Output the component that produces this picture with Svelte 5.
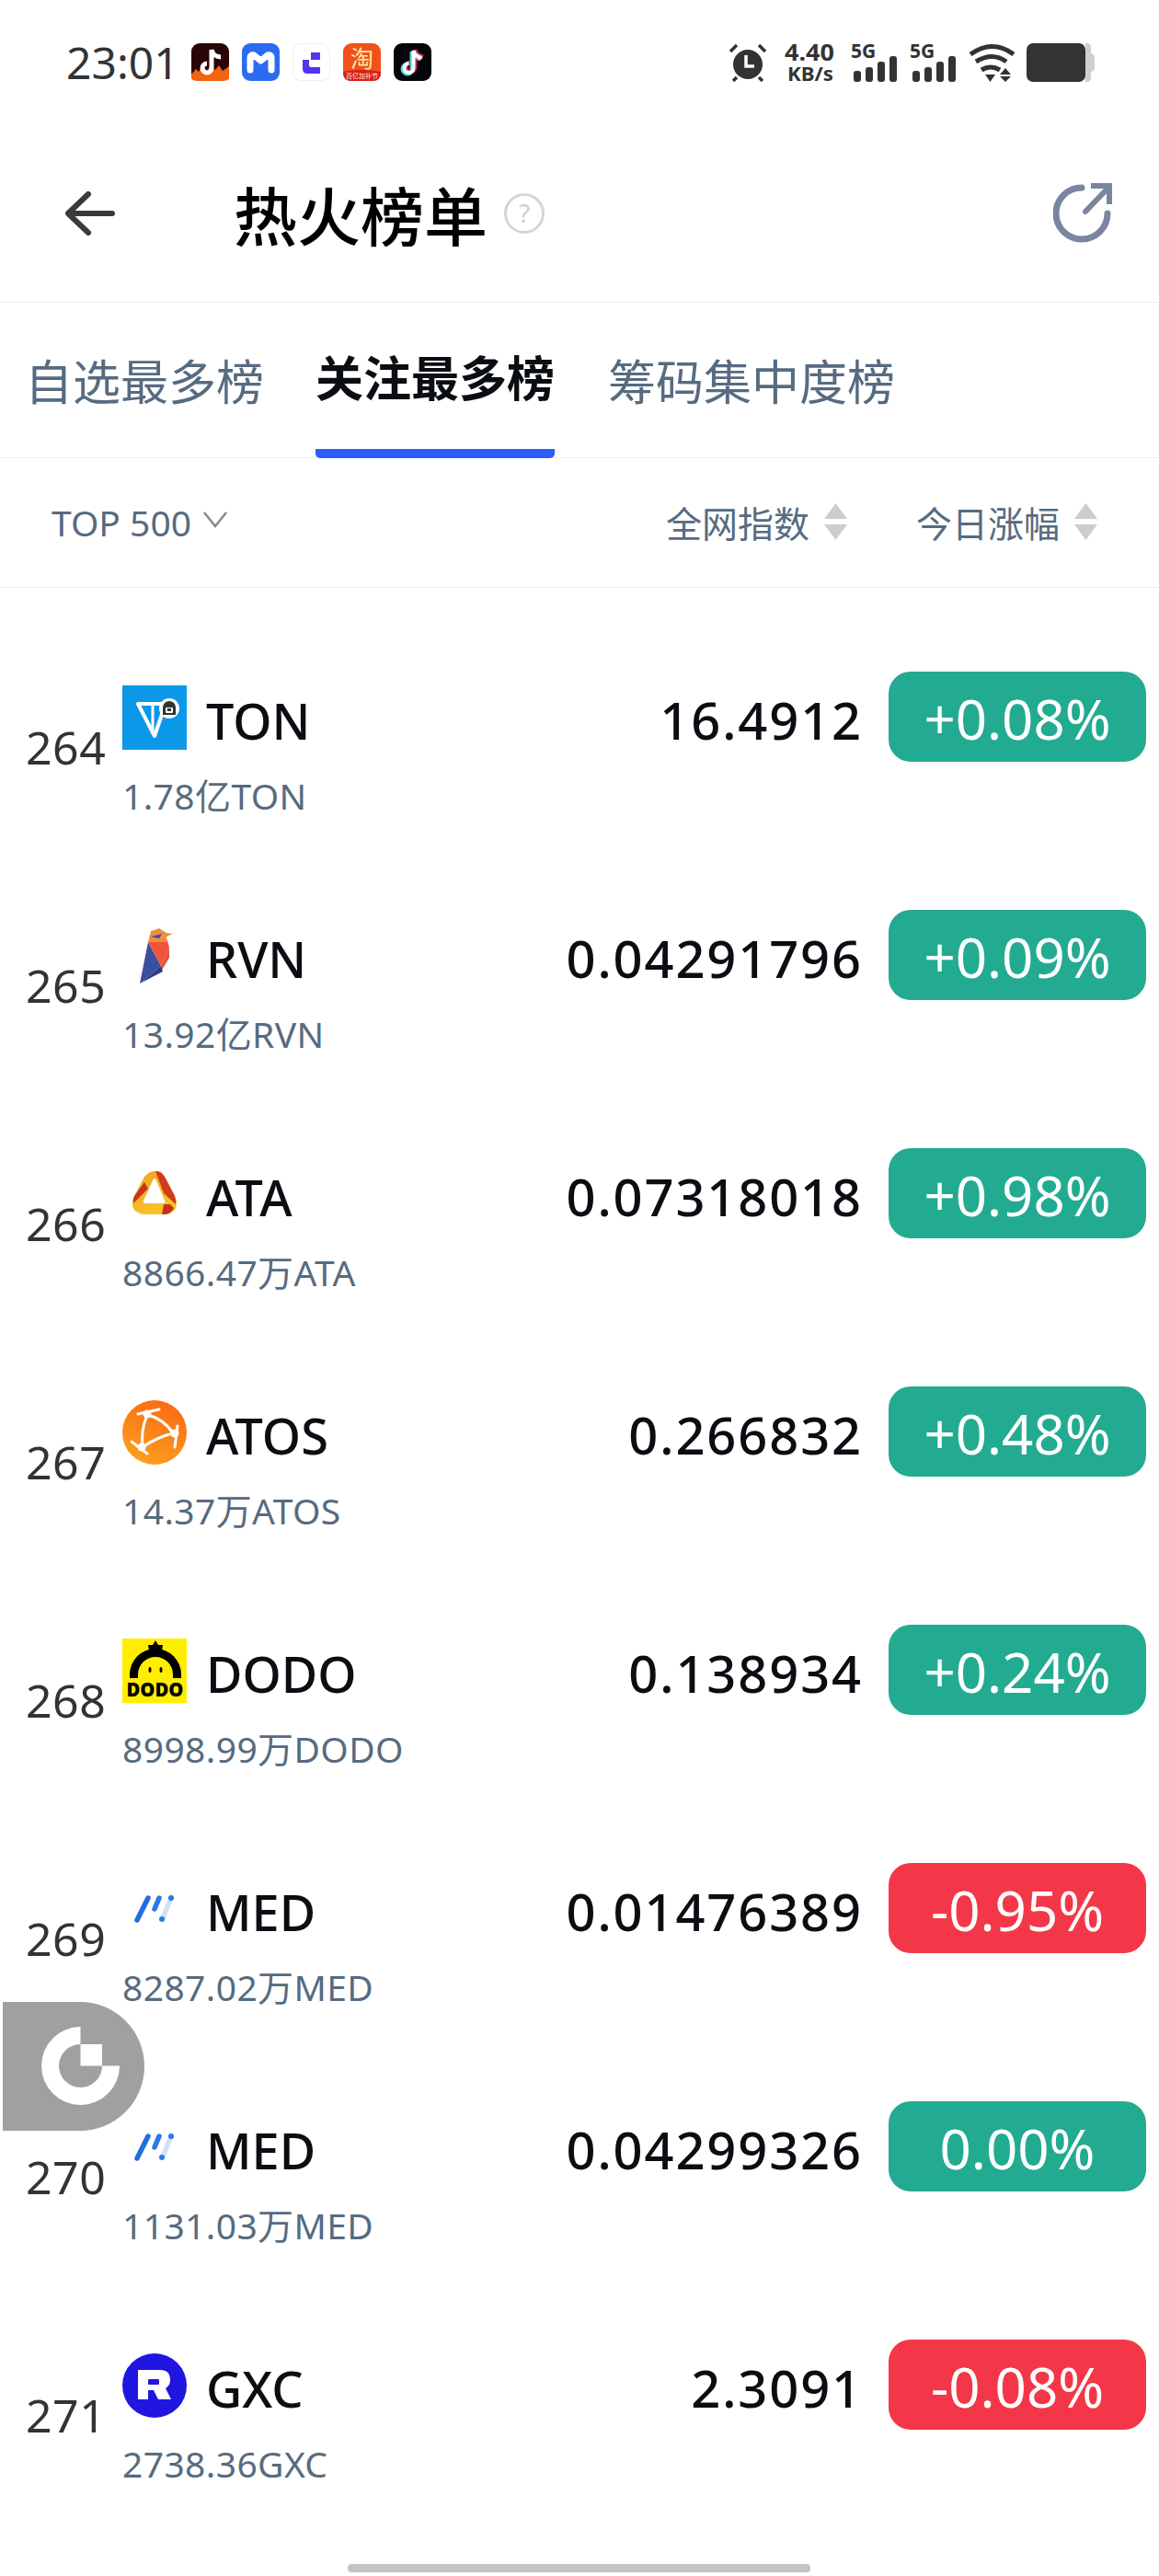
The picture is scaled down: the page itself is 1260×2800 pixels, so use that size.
<script>
  const rows = [
    { rank: 264, name: 'TON', amount: '1.78亿TON', price: '16.4912', change: '+0.08%', up: true, logo: 'ton' },
    { rank: 265, name: 'RVN', amount: '13.92亿RVN', price: '0.04291796', change: '+0.09%', up: true, logo: 'rvn' },
    { rank: 266, name: 'ATA', amount: '8866.47万ATA', price: '0.07318018', change: '+0.98%', up: true, logo: 'ata' },
    { rank: 267, name: 'ATOS', amount: '14.37万ATOS', price: '0.266832', change: '+0.48%', up: true, logo: 'atos' },
    { rank: 268, name: 'DODO', amount: '8998.99万DODO', price: '0.138934', change: '+0.24%', up: true, logo: 'dodo' },
    { rank: 269, name: 'MED', amount: '8287.02万MED', price: '0.01476389', change: '-0.95%', up: false, logo: 'med' },
    { rank: 270, name: 'MED', amount: '1131.03万MED', price: '0.04299326', change: '0.00%', up: true, logo: 'med' },
    { rank: 271, name: 'GXC', amount: '2738.36GXC', price: '2.3091', change: '-0.08%', up: false, logo: 'gxc' }
  ]
</script>

<div class="page">
  <div class="status">
    <span class="time">23:01</span>
    <div class="apps">
      <svg width="41" height="41" viewBox="0 0 41 41">
        <rect width="41" height="41" rx="9" fill="#2a0505" />
        <path d="M0 34l5-6 3 3 4-7 5 6 4-6 5 5 4-5 4 6 7-5v13q0 3-9 3H9q-9 0-9-3z" fill="#f2640f" />
        <path d="M22 7v20a5 5 0 1 1-5-5M22 7c1 5 5 8 10 8" fill="none" stroke="#fff" stroke-width="5" />
      </svg>
      <svg width="41" height="41" viewBox="0 0 41 41">
        <rect width="41" height="41" rx="9" fill="#2c6bf0" />
        <path d="M9 29V16q0-4 4-3l7.500 6 7.500-6q4-1 4 3v13" fill="none" stroke="#fff" stroke-width="7" stroke-linecap="round" stroke-linejoin="round" />
      </svg>
      <svg width="41" height="41" viewBox="0 0 41 41">
        <rect x="0.5" y="0.5" width="40" height="40" rx="9" fill="#fff" stroke="#eee" />
        <path d="M20 10h10v8H18v6q0 2 2 2h10v7H16q-5 0-5-5V18h9z" fill="#5534f0" />
      </svg>
      <svg width="41" height="41" viewBox="0 0 41 41">
        <rect width="41" height="41" rx="9" fill="#f0521a" />
        <path d="M0 31q20-4 41 0v1q0 9-9 9H9q-9 0-9-9z" fill="#d81e1e" />
        <text x="20.5" y="26" class="tao">淘</text>
        <text x="20.5" y="38" class="tao-sub">百亿加补节</text>
      </svg>
      <svg width="41" height="41" viewBox="0 0 41 41">
        <rect width="41" height="41" rx="9" fill="#05060c" />
        <path d="M20 9v19a5 5 0 1 1-5-5M20 9c1 5 5 7 9 8" fill="none" stroke="#45d6d8" stroke-width="5" />
        <path d="M23 7v19a5 5 0 1 1-5-5M23 7c1 5 5 7 9 8" fill="none" stroke="#f0345a" stroke-width="5" opacity="0.8" />
        <path d="M21.500 8v19a5 5 0 1 1-5-5M21.500 8c1 5 5 7 9 8" fill="none" stroke="#fff" stroke-width="4" />
      </svg>
    </div>
    <div class="sys">
      <svg class="alarm" width="42" height="42" viewBox="0 0 42 42">
        <circle cx="21" cy="23" r="16" fill="#333" />
        <path d="M2 9l7-7M40 9l-7-7M5 41l4-4M37 41l-4-4" stroke="#333" stroke-width="3.500" fill="none" />
        <path d="M19 13v12h9" stroke="#fff" stroke-width="3.500" fill="none" />
      </svg>
      <svg class="speed" width="56" height="42" viewBox="0 0 56 42">
        <text x="1" y="19" textLength="54" lengthAdjust="spacingAndGlyphs">4.40</text>
        <text x="4" y="41" textLength="50" lengthAdjust="spacingAndGlyphs" class="unit">KB/s</text>
      </svg>
      {#each [0, 1] as s (s)}
        <svg class="signal" width="50" height="42" viewBox="0 0 50 42">
          <text x="0" y="16" class="five">5G</text>
          <rect x="3" y="30" width="8" height="12" rx="3" fill="#333" />
          <rect x="16" y="26" width="8" height="16" rx="3" fill="#333" />
          <rect x="29" y="20" width="8" height="22" rx="3" fill="#333" />
          <rect x="42" y="14" width="8" height="28" rx="3" fill="#333" />
        </svg>
      {/each}
      <svg class="wifi" width="51" height="42" viewBox="0 0 51 42">
        <path d="M2 12q24-17 47 0M8 20q18-11 33 0M14 29q10-6 20 0" fill="none" stroke="#333" stroke-width="5" />
        <path d="M18 34h11l-5.500 8zM40 27l6 7H34zM34 36h12l-6 6z" fill="#333" />
      </svg>
      <svg width="74" height="42" viewBox="0 0 74 42">
        <path d="M64 0h2q4 0 4 6v5q4 1 4 4v12q0 3-4 4v5q0 6-4 6h-2z" fill="#cfcfcf" />
        <rect width="64" height="42" rx="7" fill="#333" />
      </svg>
    </div>
  </div>

  <div class="nav">
    <svg class="back" width="54" height="48" viewBox="0 0 54 48">
      <path d="M51 24H4M25 3L3 24l22 21" fill="none" stroke="#3a3a3a" stroke-width="6" stroke-linecap="round" stroke-linejoin="round" />
    </svg>
    <h1>热火榜单</h1>
    <svg class="help" width="44" height="44" viewBox="0 0 44 44">
      <circle cx="22" cy="22" r="20.500" fill="none" stroke="#d5d5d5" stroke-width="3" />
      <text x="22" y="32" class="qm">?</text>
    </svg>
    <svg class="share" width="64" height="66" viewBox="0 0 64 66">
      <path d="M31 5A28 28 0 1 0 59 33" fill="none" stroke="#7a859f" stroke-width="7" stroke-linecap="round" />
      <path d="M35 31L58 7" fill="none" stroke="#7a859f" stroke-width="6" stroke-linecap="round" />
      <path d="M41 0h23v23h-6V6H41z" fill="#7a859f" />
    </svg>
  </div>

  <div class="tabs">
    <span class="tab">自选最多榜</span>
    <span class="tab active">关注最多榜</span>
    <span class="tab">筹码集中度榜</span>
  </div>

  <div class="sorter">
    <div class="top">
      <span>TOP 500</span>
      <svg width="28" height="20" viewBox="0 0 28 20"><path d="M2 2l12 15L26 2" fill="none" stroke="#8a8a8a" stroke-width="2.500" /></svg>
    </div>
    <div class="col index">
      <span>全网指数</span>
      <svg width="25" height="40" viewBox="0 0 25 40"><path d="M12.500 0L25 17H0zM0 23h25L12.500 40z" fill="#cdcdcd" /></svg>
    </div>
    <div class="col">
      <span>今日涨幅</span>
      <svg width="25" height="40" viewBox="0 0 25 40"><path d="M12.500 0L25 17H0zM0 23h25L12.500 40z" fill="#cdcdcd" /></svg>
    </div>
  </div>

  <div class="list">
    {#each rows as r (r.rank)}
      <div class="row">
        <span class="rank">{r.rank}</span>
        <div class="coin">
          <div class="coin-top">
            <svg width="70" height="70" viewBox="0 0 70 70">
              {#if r.logo === 'ton'}
                <rect width="70" height="70" fill="#0c98e8" />
                <path d="M17 20h30L35 55z" fill="none" stroke="#fff" stroke-width="4" stroke-linejoin="round" />
                <path d="M33 20v33" stroke="#fff" stroke-width="3" />
                <circle cx="51" cy="25" r="11" fill="#fff" />
                <path d="M44 32v-8a7 7 0 0 1 14 0v8z" fill="#333" />
                <rect x="47" y="24" width="8" height="6" rx="1" fill="#fff" />
                <rect x="49" y="25" width="4" height="3" fill="#333" />
              {:else if r.logo === 'rvn'}
                <path d="M19 65l9-45 14 26z" fill="#3b4ea0" />
                <path d="M28 20l21-2 2 8-9 20z" fill="#f0553a" />
                <path d="M42 46l9-20 0 11-9 15z" fill="#e0533c" />
                <path d="M19 65l23-19 2 6z" fill="#2c3c8c" />
                <path d="M28 20l3-12 9-3 8 5 7 1-7 3 1 6z" fill="#ef8f3e" />
                <path d="M31 14l12-3-3 5z" fill="#3b4ea0" />
              {:else if r.logo === 'ata'}
                <defs>
                  <linearGradient id="ata-g" x1="0" y1="0" x2="0.600" y2="1">
                    <stop offset="0" stop-color="#f0a020" />
                    <stop offset="1" stop-color="#f7c62a" />
                  </linearGradient>
                </defs>
                <path d="M24 16Q35 4 46 16L57 37Q64 54 47 57H23Q6 54 13 37Z" fill="url(#ata-g)" />
                <path d="M36 10Q42 9 46 16L57 37Q59 42 58 46L45 34Z" fill="#cf3d1c" />
                <path d="M13 37L24 22 28 29 12 45Q11 41 13 37Z" fill="#c9351a" />
                <path d="M45 46H52L56 50Q53 56 47 57H43Z" fill="#c9301a" />
                <path d="M35 18Q36 18 37 20L46 42Q47 45 44 45H25Q22 45 23 42L33 20Q34 18 35 18Z" fill="#fff" />
              {:else if r.logo === 'atos'}
                <defs>
                  <linearGradient id="atos-g" x1="0.700" y1="0" x2="0.300" y2="1">
                    <stop offset="0" stop-color="#f96a14" />
                    <stop offset="1" stop-color="#fba01e" />
                  </linearGradient>
                </defs>
                <circle cx="35" cy="35" r="35" fill="url(#atos-g)" />
                <path d="M27 16Q45 20 55 36Q38 40 22 51Q20 32 27 16Z" fill="none" stroke="#fff" stroke-width="3" stroke-linejoin="round" />
                <path d="M17 15l23-5M60 28l-3 23M10 45l17 13" fill="none" stroke="#fff" stroke-width="3" stroke-linecap="round" />
                <circle cx="27" cy="15" r="4.500" fill="#fff" />
                <circle cx="57" cy="36" r="4.500" fill="#fff" />
                <circle cx="21" cy="51" r="4.500" fill="#fff" />
              {:else if r.logo === 'dodo'}
                <rect width="70" height="70" fill="#ffee00" />
                <path d="M36 2l3 5 5 0-1 6h-14l-1-6 5 0z" fill="#000" />
                <path d="M8 43V39a28 28 0 0 1 56 0v4h-9V39a19 19 0 0 0-38 0v4z" fill="#000" />
                <ellipse cx="30" cy="34" rx="1.500" ry="3" fill="#000" />
                <ellipse cx="42" cy="34" rx="1.500" ry="3" fill="#000" />
                <text x="35.500" y="63" class="dodo-mark" textLength="62" lengthAdjust="spacingAndGlyphs">DODO</text>
              {:else if r.logo === 'med'}
                <path d="M44 45l9-22" stroke="#cfe2fb" stroke-width="5.500" stroke-linecap="round" />
                <path d="M16 47L28 23" stroke="#1f6fe0" stroke-width="5.500" stroke-linecap="round" />
                <path d="M35 35l5-12" stroke="#2a78e6" stroke-width="5.500" stroke-linecap="round" />
                <circle cx="43" cy="46" r="3" fill="#2a78e6" />
                <circle cx="53" cy="23" r="3" fill="#2a78e6" />
              {:else}
                <circle cx="35" cy="35" r="35" fill="#2016e0" />
                <path d="M17 18H41Q52 18 52 29Q52 35 47 38L53 50H39L34 40H28V50H17Z" fill="#fff" />
                <rect x="28" y="28" width="12" height="6" rx="1" fill="#2016e0" />
              {/if}
            </svg>
            <span class="name">{r.name}</span>
          </div>
          <span class="amount">{r.amount}</span>
        </div>
        <span class="price">{r.price}</span>
        <span class="pill" class:down={!r.up}>{r.change}</span>
      </div>
    {/each}
  </div>

  <div class="float">
    <svg width="90" height="90" viewBox="0 0 90 90">
      <path d="M42.500 2A42.500 42.500 0 1 0 85 44.500H66A23.500 23.500 0 1 1 42.500 21z" fill="#fff" />
      <rect x="42.500" y="21" width="23.500" height="23.500" fill="#fff" />
    </svg>
  </div>
  <div class="home"></div>
</div>

<style>
  :global(body) {
    margin: 0;
    background: #fff;
  }
  .page {
    position: relative;
    width: 1260px;
    height: 2800px;
    overflow: hidden;
    font-family: 'Noto Sans', 'Noto Sans CJK SC', sans-serif;
    color: #0a0d12;
  }
  svg {
    display: block;
    flex: none;
  }

  .status {
    display: flex;
    align-items: center;
    height: 135px;
    padding: 0 70px 0 72px;
    box-sizing: border-box;
  }
  .time {
    width: 136px;
    font-size: 48px;
    color: #333;
  }
  .apps {
    display: flex;
    gap: 14px;
  }
  .tao {
    font-size: 25px;
    fill: #ffe9a8;
    text-anchor: middle;
  }
  .tao-sub {
    font-size: 7px;
    fill: #ffe9c8;
    text-anchor: middle;
  }
  .sys {
    display: flex;
    align-items: center;
    margin-left: auto;
  }
  .speed {
    margin: 0 17px 0 18px;
    overflow: visible;
  }
  .speed text {
    font-size: 25px;
    font-weight: 700;
    fill: #333;
  }
  .speed .unit {
    font-size: 22px;
  }
  .five {
    font-size: 21px;
    font-weight: 700;
    fill: #333;
  }
  .signal {
    overflow: visible;
  }
  .signal + .signal {
    margin-left: 14px;
  }
  .wifi {
    margin: 0 12px 0 14px;
  }

  .nav {
    display: flex;
    align-items: center;
    height: 194px;
    padding: 0 51px 0 71px;
    box-sizing: border-box;
    border-bottom: 1px solid #eeeeee;
  }
  h1 {
    margin: 0 18px 0 129px;
    font-size: 69px;
    font-weight: 500;
    color: #000;
  }
  .qm {
    font-size: 28px;
    fill: #cfcfcf;
    text-anchor: middle;
  }
  .share {
    margin-left: auto;
  }

  .tabs {
    display: flex;
    gap: 56px;
    height: 169px;
    padding-left: 27px;
    box-sizing: border-box;
    border-bottom: 1px solid #eeeeee;
  }
  .tab {
    display: flex;
    align-items: center;
    height: 169px;
    box-sizing: border-box;
    font-size: 52px;
    padding-bottom: 2px;
    color: #566b80;
  }
  .tab.active {
    margin-right: 2px;
    font-weight: 700;
    color: #0a0d12;
    border-bottom: 10px solid #2c5ff6;
    border-radius: 0 0 5px 5px;
    padding-bottom: 0;
  }

  .sorter {
    display: flex;
    align-items: center;
    height: 141px;
    box-sizing: border-box;
    padding: 0 67px 2px 56px;
    border-bottom: 1px solid #eeeeee;
    font-size: 39px;
    color: #566b80;
  }
  .top {
    display: flex;
    align-items: center;
    gap: 12px;
    margin-right: auto;
  }
  .top svg {
    margin-bottom: 4px;
  }
  .col {
    display: flex;
    align-items: center;
    gap: 16px;
  }
  .index {
    margin-right: 75px;
  }

  .list {
    padding-top: 91px;
  }
  .row {
    display: flex;
    align-items: flex-start;
    height: 259px;
    padding: 0 14px 0 28px;
    box-sizing: border-box;
  }
  .rank {
    width: 105px;
    margin-top: 48px;
    font-size: 50px;
    line-height: 68px;
    letter-spacing: 0.5px;
    color: #333;
  }
  .coin {
    display: flex;
    flex-direction: column;
    padding-top: 15px;
  }
  .coin-top {
    display: flex;
    align-items: center;
    gap: 21px;
    height: 70px;
  }
  .name {
    padding-top: 6px;
    font-size: 54px;
    font-weight: 500;
    line-height: 70px;
  }
  .amount {
    margin-top: 24px;
    font-size: 39px;
    letter-spacing: 0.4px;
    line-height: 52px;
    color: #566b80;
  }
  .price {
    margin-left: auto;
    margin-top: 17px;
    font-size: 56px;
    font-weight: 500;
    line-height: 70px;
    letter-spacing: 1.900px;
    color: #0a0d12;
  }
  .pill {
    display: flex;
    align-items: center;
    justify-content: center;
    width: 280px;
    height: 98px;
    padding-top: 4px;
    box-sizing: border-box;
    margin-left: 28px;
    border-radius: 24px;
    background: #22ab91;
    font-size: 60px;
    color: #fff;
  }
  .pill.down {
    background: #f43748;
  }
  .dodo-mark {
    font-size: 21px;
    font-weight: 900;
    text-anchor: middle;
    fill: #000;
  }

  .float {
    position: absolute;
    left: 3px;
    top: 2176px;
    display: flex;
    align-items: center;
    width: 154px;
    height: 140px;
    padding-left: 42px;
    box-sizing: border-box;
    border-radius: 0 70px 70px 0;
    background: #a0a0a0;
  }
  .home {
    position: absolute;
    left: 378px;
    top: 2787px;
    width: 503px;
    height: 9px;
    border-radius: 4px;
    background: #c4c4c4;
  }
</style>
